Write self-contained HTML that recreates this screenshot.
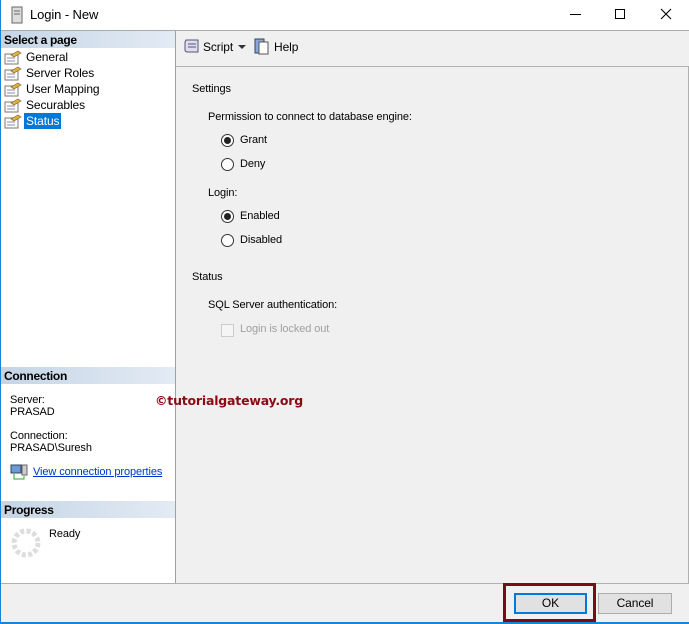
<!DOCTYPE html><html><head><style>
*{margin:0;padding:0;box-sizing:border-box}
body{width:689px;height:624px;position:relative;background:#fff;font-family:"Liberation Sans",sans-serif;font-size:11px;letter-spacing:-0.1px;color:#000;overflow:hidden}
.a{position:absolute}
.hdr{position:absolute;left:1px;width:174px;height:17px;background:linear-gradient(90deg,#c5d5e6,#e3ebf4);font-weight:bold;font-size:12px;padding:2px 3px;letter-spacing:-0.3px}
.rad{position:absolute;width:13px;height:13px;border:1px solid #333;border-radius:50%;background:#fff}
.rad.on::after{content:"";position:absolute;left:2px;top:2px;width:7px;height:7px;border-radius:50%;background:#222}
</style></head><body>
<div class="a" style="left:0;top:0;width:1px;height:624px;background:#1883d7"></div>
<div class="a" style="left:0;top:622px;width:689px;height:2px;background:#1883d7"></div>
<svg class="a" style="left:11px;top:6px" width="12" height="18"><rect x="1" y="1" width="10" height="16" fill="#ddd" stroke="#666"/><line x1="3" y1="5" x2="9" y2="5" stroke="#666"/><line x1="3" y1="8" x2="9" y2="8" stroke="#666"/></svg>
<div class="a" style="left:30px;top:7px;font-size:13px">Login - New</div>
<div class="a" style="left:570px;top:14px;width:11px;height:1px;background:#000"></div>
<div class="a" style="left:615px;top:9px;width:10px;height:10px;border:1px solid #000"></div>
<svg class="a" style="left:660px;top:8px" width="12" height="12"><path d="M1 1L11 11M11 1L1 11" stroke="#000" stroke-width="1.1"/></svg>
<div class="a" style="left:1px;top:30px;width:688px;height:1px;background:#aaa"></div>
<div class="a" style="left:175px;top:31px;width:1px;height:553px;background:#a0a0a0"></div>
<div class="hdr" style="top:31px">Select a page</div>
<div class="a" style="left:0;top:49px;font-size:12px">
<div class="a" style="left:26px;top:1px;width:120px">General</div>
<div class="a" style="left:26px;top:17px;width:120px">Server Roles</div>
<div class="a" style="left:26px;top:33px;width:120px">User Mapping</div>
<div class="a" style="left:26px;top:49px;width:120px">Securables</div>
<div class="a" style="left:24px;top:64px;padding:1px 2px;background:#0078d7;color:#fff">Status</div>
</div>
<svg class="a" style="left:4px;top:50px" width="18" height="80">
<g id="ic"><rect x="1" y="4" width="13" height="10" fill="#fff" stroke="#777"/><line x1="3" y1="8" x2="11" y2="8" stroke="#88a"/><line x1="3" y1="11" x2="11" y2="11" stroke="#88a"/><path d="M7 5 L14 1 L17 3 L10 7Z" fill="#e0b040" stroke="#806020" stroke-width=".6"/></g>
<use href="#ic" y="16"/><use href="#ic" y="32"/><use href="#ic" y="48"/><use href="#ic" y="64"/></svg>
<div class="hdr" style="top:367px">Connection</div>
<div class="a" style="left:10px;top:394px;line-height:12px">Server:<br>PRASAD</div>
<div class="a" style="left:10px;top:430px;line-height:12px">Connection:<br>PRASAD\Suresh</div>
<svg class="a" style="left:10px;top:464px" width="18" height="16"><rect x="1" y="1" width="10" height="8" fill="#6a9bd8" stroke="#345"/><rect x="12" y="1" width="5" height="10" fill="#ccc" stroke="#666"/><path d="M4 10v5h10v-3" stroke="#2a2" fill="none"/></svg>
<div class="a" style="left:33px;top:466px;color:#0033cc;text-decoration:underline">View connection properties</div>
<div class="hdr" style="top:501px">Progress</div>
<svg class="a" style="left:10px;top:527px" width="32" height="32"><circle cx="16" cy="16" r="12" fill="none" stroke="#ddd" stroke-width="5" stroke-dasharray="4 2.3"/></svg>
<div class="a" style="left:49px;top:528px">Ready</div>
<div class="a" style="left:176px;top:31px;width:513px;height:553px;background:#f0f0f0"></div>
<div class="a" style="left:176px;top:66px;width:513px;height:1px;background:#b0b0b0"></div>
<div class="a" style="left:688px;top:66px;width:1px;height:518px;background:#b0b0b0"></div>
<svg class="a" style="left:183px;top:38px" width="18" height="18"><path d="M3 2h12v12H5q-3 0-3-2V4z" fill="#dde" stroke="#557"/><line x1="5" y1="6" x2="13" y2="6" stroke="#557"/><line x1="5" y1="9" x2="13" y2="9" stroke="#557"/></svg>
<div class="a" style="left:203px;top:40px;font-size:12px">Script</div>
<div class="a" style="left:238px;top:45px;border:4px solid transparent;border-top:4px solid #333"></div>
<svg class="a" style="left:254px;top:38px" width="16" height="18"><rect x="1" y="1" width="9" height="14" fill="#8aa8d8" stroke="#345"/><rect x="5" y="4" width="9" height="12" fill="#fff" stroke="#555"/></svg>
<div class="a" style="left:274px;top:40px;font-size:12px">Help</div>
<div class="a" style="left:192px;top:83px">Settings</div>
<div class="a" style="left:208px;top:111px">Permission to connect to database engine:</div>
<div class="rad on" style="left:221px;top:134px"></div><div class="a" style="left:240px;top:134px">Grant</div>
<div class="rad" style="left:221px;top:158px"></div><div class="a" style="left:240px;top:158px">Deny</div>
<div class="a" style="left:208px;top:187px">Login:</div>
<div class="rad on" style="left:221px;top:210px"></div><div class="a" style="left:240px;top:210px">Enabled</div>
<div class="rad" style="left:221px;top:234px"></div><div class="a" style="left:240px;top:234px">Disabled</div>
<div class="a" style="left:192px;top:271px">Status</div>
<div class="a" style="left:208px;top:299px">SQL Server authentication:</div>
<div class="a" style="left:221px;top:324px;width:13px;height:13px;border:1px solid #ccc;background:#f5f5f5"></div>
<div class="a" style="left:240px;top:323px;color:#a0a0a0">Login is locked out</div>
<div class="a" style="left:155px;top:393px;color:#8b0a14;font-weight:bold;font-size:12.5px;letter-spacing:-0.2px;font-family:'DejaVu Sans',sans-serif">©tutorialgateway.org</div>
<div class="a" style="left:1px;top:583px;width:688px;height:1px;background:#b0b0b0"></div>
<div class="a" style="left:1px;top:584px;width:688px;height:38px;background:#f0f0f0"></div>
<div class="a" style="left:503px;top:583px;width:93px;height:39px;border:3px solid #7a0a1a"></div>
<div class="a" style="left:514px;top:593px;width:73px;height:21px;border:2px solid #0078d7;background:#e1e1e1;text-align:center;line-height:17px;font-size:12px">OK</div>
<div class="a" style="left:598px;top:593px;width:74px;height:21px;border:1px solid #adadad;background:#e1e1e1;text-align:center;line-height:19px;font-size:12px">Cancel</div>
</body></html>
